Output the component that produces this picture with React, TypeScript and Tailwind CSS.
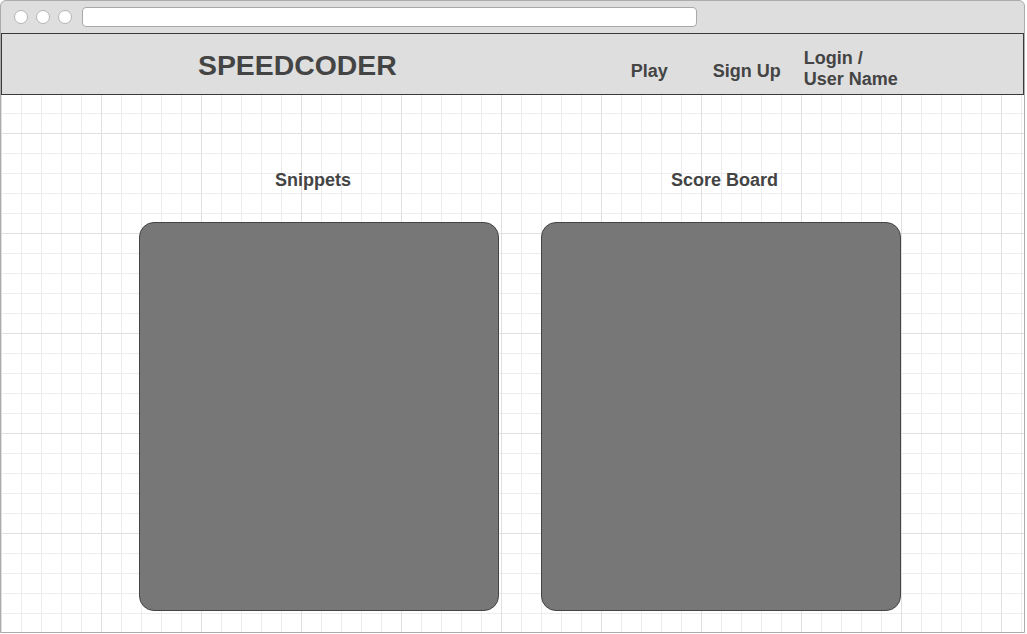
export default function App() {
  return (
    <div className="w-full h-[634px] bg-white font-['Liberation_Sans',Arial,sans-serif]">
      <div className="w-[1025px] h-[633px] flex flex-col border border-[#ababab] rounded-t-[6px] overflow-hidden bg-[#dedede]">
        {/* browser chrome */}
        <div className="h-[32px] flex items-center pl-[13px] shrink-0">
          <div className="w-[14px] h-[14px] rounded-full bg-white border border-[#b4b4b4]" />
          <div className="w-[14px] h-[14px] rounded-full bg-white border border-[#b4b4b4] ml-[8px]" />
          <div className="w-[14px] h-[14px] rounded-full bg-white border border-[#b4b4b4] ml-[8px]" />
          <div className="w-[615px] h-[20px] ml-[10px] rounded-[4px] bg-white border border-[#a8a8a8]" />
        </div>

        {/* header */}
        <div className="h-[62px] shrink-0 flex items-start border border-[#3a3a3a] text-[#444444] font-bold">
          <div className="ml-[196px] mt-[17px] text-[28.4px] leading-[28px]">SPEEDCODER</div>
          <div className="ml-[234px] mt-[27px] text-[18px] leading-[21px]">Play</div>
          <div className="ml-[45px] mt-[27px] text-[18px] leading-[21px]">Sign Up</div>
          <div className="ml-[23px] mt-[14px] text-[18px] leading-[21px]">
            Login /
            <br />
            User Name
          </div>
        </div>

        {/* content */}
        <div className="flex-1 flex gap-[42px] pl-[138px] pt-[75px] bg-white bg-[linear-gradient(to_right,#e0e0e0_1px,transparent_1px),linear-gradient(to_bottom,#e0e0e0_1px,transparent_1px),linear-gradient(to_right,#ededed_1px,transparent_1px),linear-gradient(to_bottom,#ededed_1px,transparent_1px)] bg-[length:100px_100px,100px_100px,20px_20px,20px_20px] bg-[position:0_38px,0_38px,0_18px,0_18px]">
          <div className="w-[360px] flex flex-col">
            <div className="text-center pr-[12px] text-[18px] leading-[21px] font-bold text-[#444444]">Snippets</div>
            <div className="mt-[31px] h-[389px] rounded-[15px] bg-[#777777] border border-[#444444]" />
          </div>
          <div className="w-[360px] flex flex-col">
            <div className="text-center pl-[7px] text-[18px] leading-[21px] font-bold text-[#444444]">Score Board</div>
            <div className="mt-[31px] h-[389px] rounded-[15px] bg-[#777777] border border-[#444444]" />
          </div>
        </div>
      </div>
    </div>
  );
}
